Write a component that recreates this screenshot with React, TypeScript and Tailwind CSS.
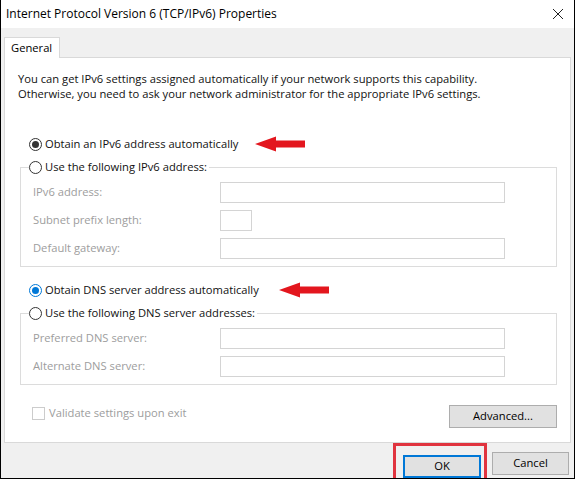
import React from "react";

const FONT = "font-['Open_Sans',sans-serif]";

function Radio({ checked, focused }: { checked?: boolean; focused?: boolean }) {
  return (
    <span
      className={`flex h-[13px] w-[13px] shrink-0 items-center justify-center rounded-full border bg-white ${
        focused ? "border-[#0078d7]" : "border-[#333333]"
      }`}
    >
      {checked && (
        <span className={`h-[7px] w-[7px] rounded-full ${focused ? "bg-[#0078d7]" : "bg-[#333333]"}`} />
      )}
    </span>
  );
}

function Arrow() {
  return (
    <svg width="50" height="16" viewBox="0 0 50 16" className="shrink-0">
      <polygon points="0,8 21,0.5 21,4.5 50,4.5 50,11.5 21,11.5 21,15.5" fill="#e3161e" />
    </svg>
  );
}

function Field({ label, narrow }: { label: string; narrow?: boolean }) {
  return (
    <div className="grid grid-cols-[187px_1fr] items-center">
      <span className="text-[#9d9d9d]">{label}</span>
      <div
        className={`h-[21px] border border-[#d4d4d4] bg-white ${narrow ? "w-[32px]" : "w-[285px]"}`}
      />
    </div>
  );
}

function GroupBox({ legend, children }: { legend: string; children: React.ReactNode }) {
  return (
    <fieldset className="ml-[2px] w-[537px] border border-[#dcdcdc] px-0 pb-[7px] pl-[12px]">
      <legend className="ml-[-4px] flex items-center gap-[3px] bg-white pr-[2px] leading-[16px]">
        <Radio />
        <span>Use the following {legend}</span>
      </legend>
      <div className="flex flex-col gap-[7px] pt-[7px]">{children}</div>
    </fieldset>
  );
}

function Button({ label, primary }: { label: string; primary?: boolean }) {
  return (
    <button
      className={`h-[23px] bg-[#e1e1e1] text-[11.2px] text-black ${
        primary ? "w-[78px] border-2 border-[#0078d7]" : "w-[77px] border border-[#adadad]"
      }`}
    >
      {label}
    </button>
  );
}

export default function App() {
  return (
    <div
      className={`${FONT} flex h-[479px] w-[575px] flex-col border-x border-b border-black bg-[#f0f0f0] text-[11.2px] text-[#111111]`}
    >
      {/* title bar */}
      <div className="flex h-[28px] shrink-0 items-center justify-between bg-white pl-[5px] pr-[11px]">
        <span className="text-[12px] text-black">Internet Protocol Version 6 (TCP/IPv6) Properties</span>
        <svg width="10" height="10" viewBox="0 0 10 10">
          <path d="M0 0L10 10M10 0L0 10" stroke="#222" strokeWidth="1" />
        </svg>
      </div>

      <div className="flex flex-1 flex-col pt-[9px]">
        {/* tab */}
        <div className="relative z-10 -mb-px ml-[3px] flex h-[21px] w-[56px] items-center border-x border-t border-[#d9d9d9] bg-white pl-[6px] text-black">
          General
        </div>

        {/* panel */}
        <div className="ml-[3px] flex h-[386px] w-[567px] flex-col border border-[#d9d9d9] bg-white pb-[14px] pl-[13px] pr-[13px] pt-[13px]">
          <p className="leading-[15px]">
            You can get IPv6 settings assigned automatically if your network supports this capability.
            <br />
            Otherwise, you need to ask your network administrator for the appropriate IPv6 settings.
          </p>

          <div className="mt-[35px] ml-[11px] flex h-[16px] items-center gap-[3px]">
            <Radio checked />
            <span>Obtain an IPv6 address automatically</span>
            <span className="ml-[14px]">
              <Arrow />
            </span>
          </div>

          <div className="mt-[7px]">
            <GroupBox legend="IPv6 address:">
              <Field label="IPv6 address:" />
              <Field label="Subnet prefix length:" narrow />
              <Field label="Default gateway:" />
            </GroupBox>
          </div>

          <div className="mt-[15px] ml-[11px] flex h-[16px] items-center gap-[3px]">
            <Radio checked focused />
            <span>Obtain DNS server address automatically</span>
            <span className="ml-[17px]">
              <Arrow />
            </span>
          </div>

          <div className="mt-[7px]">
            <GroupBox legend="DNS server addresses:">
              <Field label="Preferred DNS server:" />
              <Field label="Alternate DNS server:" />
            </GroupBox>
          </div>

          <div className="mt-[20px] flex items-start justify-between">
            <div className="ml-[14px] flex items-center gap-[4px] text-[#9d9d9d]">
              <span className="h-[13px] w-[13px] border border-[#cccccc] bg-white" />
              <span>Validate settings upon exit</span>
            </div>
            <button className="h-[23px] w-[108px] border border-[#adadad] bg-[#e1e1e1] text-[11.2px] text-black">
              Advanced...
            </button>
          </div>
        </div>

        {/* bottom buttons */}
        <div className="flex flex-1 items-end justify-end pr-[5px]">
          <div className="mr-[5px] flex h-[35px] w-[94px] items-end border-[3px] border-b-0 border-[#e0343f] pl-[7px]">
            <Button label="OK" primary />
          </div>
          <div className="pb-[3px]">
            <Button label="Cancel" />
          </div>
        </div>
      </div>
    </div>
  );
}
